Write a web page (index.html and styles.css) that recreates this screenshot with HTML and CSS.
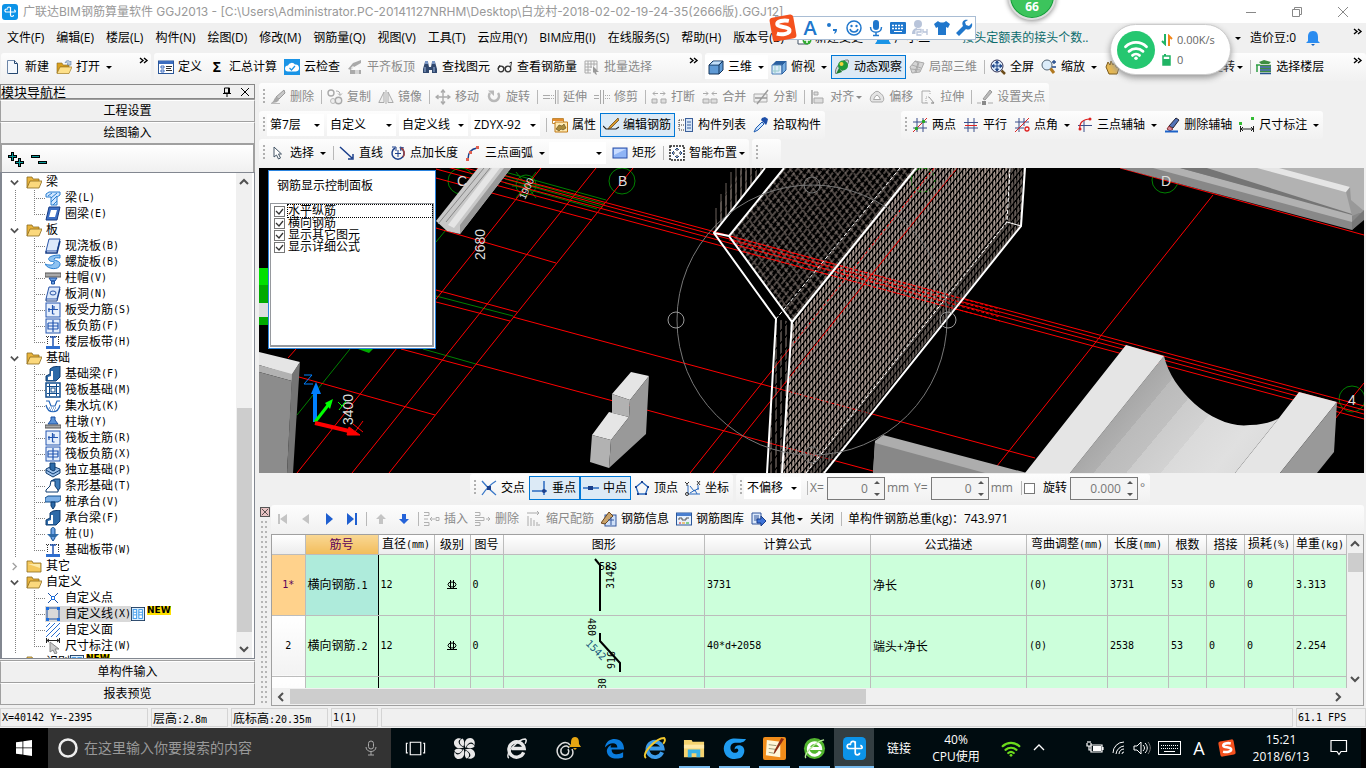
FILE: index.html
```
<!DOCTYPE html>
<html lang="zh-CN">
<head>
	<meta charset="utf-8">
	<title>广联达BIM钢筋算量软件 GGJ2013</title>
	<link rel="stylesheet" href="styles.css">
</head>
<body>
	<!-- 图标库 -->
	<svg class="sprite">
		<symbol id="app" viewBox="0 0 16 16"><rect width="16" height="16" rx="3" fill="#0c93e8"/><path d="M8.500 3v8a1.500 1.500 0 0 0 3 0M8.500 4.500a1.500 1.500 0 0 0-3 0M13 8H4.500a1.500 1.500 0 1 1 1-2.500M13 8a1.200 1.200 0 0 0-1-2" fill="none" stroke="#fff" stroke-width="1.200"/></symbol>
		<symbol id="new" viewBox="0 0 16 16"><path d="M2.500 1.500h7l3 3v10h-10z" fill="#f4f8fd" stroke="#6d86a8"/><path d="M9.500 1.500v3h3M12.500 5v9.500h-9" fill="none" stroke="#24476f"/></symbol>
		<symbol id="open" viewBox="0 0 16 16"><path d="M1 4h5l1 2h6v2H4l-3 6z" fill="#d9a01f" stroke="#8b6a1c" stroke-width=".6"/><path d="M4 8h12l-3 6.500H1z" fill="#fde08a" stroke="#a37d22" stroke-width=".7"/><path d="M9 4c1-3 4-3 5-1l1-1v4h-4l1-1c-1-2-2-2-3-1z" fill="#b9cbe0" stroke="#5f7fa8" stroke-width=".6"/></symbol>
		<symbol id="define" viewBox="0 0 16 16"><rect x=".5" y="2" width="15" height="12.500" fill="#fff" stroke="#2b579a"/><rect x="1" y="2" width="14" height="3" fill="#3c6dc0"/><path d="M3 7h3v2H3zM3 11h3v2H3z" fill="none" stroke="#3c6dc0"/><path d="M8 7.500h6M8 9.500h5M8 11.500h6" stroke="#333"/></symbol>
		<symbol id="cloud" viewBox="0 0 16 16"><rect width="16" height="16" fill="#1a94e6"/><path d="M4 12.500a3 3 0 0 1 0-6 4 4 0 0 1 7-1 3.500 3.500 0 0 1 1 7z" fill="#fff"/><path d="M5.500 9l2 2 3.500-4" fill="none" stroke="#1a94e6" stroke-width="1.200"/></symbol>
		<symbol id="aligntop" viewBox="0 0 16 16"><path d="M1 10l5-6 8-3v3L7 8l-3 3zM3 11h11v4H3z" fill="#aaa"/><path d="M5 11V8h2v3M9 15V9h2v6" stroke="#fff" fill="none"/></symbol>
		<symbol id="find" viewBox="0 0 16 16"><path d="M3 3h3l1 5h2l1-5h3l2 7v4h-5v-3H7v3H1v-4z" fill="#31486e"/><path d="M3 2h3v3H3zM10 2h3v3h-3z" fill="#7895c4"/><path d="M3 8v5M12 8v5" stroke="#9db6dc"/></symbol>
		<symbol id="glasses" viewBox="0 0 16 16"><circle cx="4" cy="10" r="2.800" fill="none" stroke="#333" stroke-width="1.300"/><circle cx="11" cy="10" r="2.800" fill="none" stroke="#333" stroke-width="1.300"/><path d="M6.500 9h2M1 10L3 6M13.500 9l1-6-2 1" fill="none" stroke="#333"/></symbol>
		<symbol id="batch" viewBox="0 0 16 16"><path d="M1 2h12v9M1 2v12h6M1 5h12M1 8h7M1 11h6M4 2v12M7 2v7M10 2v5" fill="none" stroke="#aaa"/><path d="M9 7l6 6-3 0 1 3-2-1-1-2-1 1z" fill="#999"/></symbol>
		<symbol id="cube" viewBox="0 0 16 16"><path d="M1 6l4-4h10v9l-4 4H1z" fill="#5f9ad5" stroke="#16365c"/><path d="M1 6h10v9M11 6l4-4" fill="none" stroke="#16365c"/><path d="M2 5.500l3.500-3h8L10.500 5.500z" fill="#c5e0f8"/></symbol>
		<symbol id="topview" viewBox="0 0 16 16"><path d="M1 6l4-4h10l-4 4z" fill="#2a5f9f"/><path d="M1 6h10v9H1z" fill="#d9ebfa" stroke="#4c7fb8"/><path d="M11 6l4-4v9l-4 4z" fill="#79aee0" stroke="#2a5f9f"/><path d="M4 6v9M8 6v6H1" fill="none" stroke="#9cc"/></symbol>
		<symbol id="orbit" viewBox="0 0 16 16"><path d="M2 15C-1 10 8 0 14 1c2 1-2 10-9 12" fill="#cfd8dc" stroke="#777"/><circle cx="9" cy="6.500" r="5" fill="#1f9a3a"/><circle cx="7.500" cy="5" r="2" fill="#f0d23c"/><path d="M2 15l3-6 3 4z" fill="#1c7f2e"/></symbol>
		<symbol id="local3d" viewBox="0 0 16 16"><path d="M1 8l5-6 9 2-4 9-8 1z" fill="#d5d5d5" stroke="#aaa"/><path d="M3 6l9 3M6 2l3 2-3 9M10 3L7 14M2 10l9 1" fill="none" stroke="#aaa"/></symbol>
		<symbol id="full" viewBox="0 0 16 16"><circle cx="7" cy="7" r="6" fill="#d9e8f8" stroke="#335"/><path d="M11.500 11.500L15 15" stroke="#6b4b1a" stroke-width="2.500"/><path d="M7 2v10M2 7h10M7 2L5.500 4h3zM7 12l-1.500-2h3zM2 7l2-1.500v3zM12 7l-2-1.500v3z" fill="#224a8c" stroke="#224a8c"/></symbol>
		<symbol id="zoomi" viewBox="0 0 16 16"><circle cx="6" cy="6" r="5" fill="#dcecfa" stroke="#567"/><path d="M9.500 9.500L13 14" stroke="#b07820" stroke-width="3"/><path d="M11 3h4M13 1v4M11 8h4" stroke="#224a8c" stroke-width="1.300"/></symbol>
		<symbol id="hand" viewBox="0 0 16 16"><path d="M2 8l2-5 2 3 1-4 2 4 2-3 1 5 3 1-2 6H5z" fill="#e8b951" stroke="#7b5a1b"/></symbol>
		<symbol id="floor" viewBox="0 0 16 16"><path d="M3 3l5-2 7 2-2 2H5z" fill="#3e8e41"/><path d="M4 6.500h11M4 9.500h11M4 12.500h11" stroke="#3e8e41" stroke-width="1.500"/><path d="M4 8h11M4 11h11M4 14.500h11" stroke="#24508f" stroke-width="1.300"/><path d="M1 6v7M0 6h4" stroke="#2f9e44" stroke-width="1.500"/></symbol>
		<symbol id="brush" viewBox="0 0 16 16"><path d="M14 1l1 3-6 6-3-2z" fill="#c8c8c8" stroke="#999"/><path d="M6 8l3 2c0 3-4 4-8 4 3-1 3-5 5-6z" fill="#a8a8a8"/><path d="M1 14.500h9" stroke="#bbb"/></symbol>
		<symbol id="copy" viewBox="0 0 16 16"><circle cx="4" cy="4" r="3" fill="none" stroke="#aaa" stroke-width="1.400"/><circle cx="6" cy="12" r="2.500" fill="#eee" stroke="#bbb"/><circle cx="11.500" cy="11.500" r="3.200" fill="#eee" stroke="#aaa" stroke-width="1.400"/><path d="M9 2c3 0 4 1 4 4M11 4.500l2 2 2-2" fill="none" stroke="#aaa"/></symbol>
		<symbol id="mirror" viewBox="0 0 16 16"><path d="M6 3v10.500H.8zM10 3v10.500h5.200z" fill="#eee" stroke="#aaa"/><path d="M8 1v14" stroke="#aaa"/></symbol>
		<symbol id="move" viewBox="0 0 16 16"><path d="M8 1v14M1 8h14M6 3.500L8 1l2 2.500M6 12.500L8 15l2-2.500M3.500 6L1 8l2.500 2M12.500 6L15 8l-2.500 2" fill="none" stroke="#aaa" stroke-width="1.400"/></symbol>
		<symbol id="rotate" viewBox="0 0 16 16"><path d="M4 4a5 5 0 1 0 8 0" fill="none" stroke="#b8b8b8" stroke-width="2.600"/><path d="M2 1.500h6V7z" fill="#b8b8b8"/></symbol>
		<symbol id="extend" viewBox="0 0 16 16"><path d="M0 6.500h7M0 9.500h7M12.500 1v14M15 1v14" fill="none" stroke="#aaa"/><path d="M8 6.500h4M8 9.500h4" stroke="#aaa" stroke-dasharray="1 1"/></symbol>
		<symbol id="trim" viewBox="0 0 16 16"><path d="M0 6.500h5M0 9.500h5M6.500 1v14M9.500 1v14" stroke="#aaa" fill="none"/><path d="M11 6.500h5M11 9.500h5" stroke="#aaa" stroke-dasharray="1 1"/></symbol>
		<symbol id="break" viewBox="0 0 16 16"><path d="M1 10h5v4H1zM10 10h5v4h-5z" fill="#ddd" stroke="#aaa"/><path d="M7 4.500H2M4 2.500l-2 2 2 2M9 4.500h5M12 2.500l2 2-2 2" fill="none" stroke="#aaa"/></symbol>
		<symbol id="merge" viewBox="0 0 16 16"><path d="M1 10h6v4H1zM9 10h6v4H9z" fill="#ddd" stroke="#aaa"/><path d="M1 4.500h5M4 2.500l2 2-2 2M15 4.500h-5M12 2.500l-2 2 2 2" fill="none" stroke="#aaa"/></symbol>
		<symbol id="split" viewBox="0 0 16 16"><path d="M1 5h13v8H1z" fill="#eee" stroke="#aaa"/><path d="M4 15L15 1M2 9h12" stroke="#999" stroke-width="1.400"/></symbol>
		<symbol id="align" viewBox="0 0 16 16"><path d="M2 1v14" stroke="#999" stroke-width="1.400"/><path d="M4 3h4v3H4zM4 9h9v5H4z" fill="#ddd" stroke="#aaa"/></symbol>
		<symbol id="offset" viewBox="0 0 16 16"><path d="M5 4a3.500 3.500 0 0 1 6 0c4 2 5 8 2 9H3c-3-1-2-7 2-9z" fill="#e4e4e4" stroke="#aaa"/><path d="M6.500 7a2 2 0 0 1 3 0l2 3.500h-7z" fill="#fff" stroke="#aaa"/></symbol>
		<symbol id="stretch" viewBox="0 0 16 16"><path d="M10 2H2v12h6" fill="#f6f6f6" stroke="#aaa"/><path d="M10 2v4M6 14V8h4" fill="none" stroke="#aaa" stroke-dasharray="1 1"/><path d="M9 8l5 6-2.500 0M14 14h-3" fill="none" stroke="#999"/></symbol>
		<symbol id="grips" viewBox="0 0 16 16"><path d="M0 14h4M11 14h5" stroke="#aaa"/><path d="M13 1l2 2-7 8-2-1z" fill="#bbb" stroke="#999"/><path d="M5 12h4v4H5z" fill="#888"/></symbol>
		<symbol id="prop" viewBox="0 0 16 16"><path d="M.5 1.500h11v5H.5z" fill="#fff" stroke="#c08a3a"/><path d="M1 2h10v2H1z" fill="#e58b2a"/><path d="M3 5h12.500v10H3z" fill="#ffe9b0" stroke="#c07a18"/><path d="M4 12l3-4 3 1 2-2 2 4-3 2-2-1-2 2z" fill="#a98a3a" stroke="#5a471a" stroke-width=".6"/></symbol>
		<symbol id="editbar" viewBox="0 0 16 16"><path d="M0 9l3 3h10l3-2" fill="none" stroke="#222" stroke-width="1.200"/><path d="M15 1l1 2-8 8-3 1 2-3z" fill="#d99a2b" stroke="#5a3a10" stroke-width=".7"/></symbol>
		<symbol id="list" viewBox="0 0 16 16"><path d="M1 3h5M1 8h5M1 13h5M1 3v10" fill="none" stroke="#333" stroke-dasharray="1 1"/><rect x="7.500" y="1.500" width="7" height="13" fill="#d4e4f7" stroke="#3b5f9a"/><path d="M9 5h4M9 8h4M9 11h4" stroke="#3b5f9a"/></symbol>
		<symbol id="pick" viewBox="0 0 16 16"><path d="M1 15l2-4 6-6 2 2-6 6z" fill="#cde5ff" stroke="#1e5bb0"/><path d="M8 3l5 5 1-2 1-4-3-2-3 1z" fill="#1e4fa8"/></symbol>
		<symbol id="grid2" viewBox="0 0 16 16"><path d="M5 1v14M11 1v14M1 5h14M1 11h14" stroke="#3b4f8a"/><path d="M1 15L15 1" stroke="#d22"/><circle cx="4.500" cy="11.500" r="1.700" fill="#2a2"/><circle cx="11.500" cy="4.500" r="1.700" fill="#2a2"/></symbol>
		<symbol id="gridp" viewBox="0 0 16 16"><path d="M5 1v14M11 1v14M1 11h14" stroke="#3b4f8a"/><path d="M1 5.500h14" stroke="#3b4f8a"/><path d="M2 8.500h12" stroke="#d22"/></symbol>
		<symbol id="grida" viewBox="0 0 16 16"><path d="M5 1v14M10 1v8M1 5h14M1 11h9" stroke="#3b4f8a"/><path d="M1 15L15 1" stroke="#d22"/><circle cx="13" cy="12" r="2" fill="none" stroke="#d22" stroke-width="1.300"/></symbol>
		<symbol id="grid3" viewBox="0 0 16 16"><path d="M7 3v12M1 8.500h14" stroke="#3b4f8a"/><path d="M3 12C2 6 6 2 13 2" fill="none" stroke="#d22" stroke-width="1.200"/><circle cx="13" cy="2" r="1.500" fill="#d22"/><circle cx="3" cy="12" r="1.500" fill="#d22"/></symbol>
		<symbol id="delaxis" viewBox="0 0 16 16"><path d="M12 1l3 2-6 8-4-2z" fill="#5273b8" stroke="#223"/><path d="M5 9l4 3-3 2-3-2z" fill="#d98a9a" stroke="#833"/><path d="M1 14.500h13" stroke="#1c62c8" stroke-width="2"/></symbol>
		<symbol id="dim" viewBox="0 0 16 16"><path d="M1.500 9v6M14.500 9v6M2 12h12M4 10l-2 2 2 2M12 10l2 2-2 2" fill="none" stroke="#222"/><path d="M0 5h3v3H0zM12 0h3v3h-3z" fill="#3b3"/></symbol>
		<symbol id="cursor" viewBox="0 0 16 16"><path d="M4 2v10l2.500-2 2 4 2-1-2-4h3z" fill="#fff" stroke="#456"/></symbol>
		<symbol id="line" viewBox="0 0 16 16"><path d="M1 2l12 11M14 9v5H9" fill="none" stroke="#1b3f8b" stroke-width="1.500"/></symbol>
		<symbol id="ptlen" viewBox="0 0 16 16"><path d="M5 3a6 6 0 1 0 6 0" fill="none" stroke="#1b3f8b" stroke-width="1.500"/><path d="M8 5v7M5 8.500h6M2 2h4v4M14 3l-4-1 1 4" fill="none" stroke="#1b3f8b"/><path d="M11 3a6 6 0 0 1 2 9" stroke="#a04040" fill="none" stroke-width="1.500"/></symbol>
		<symbol id="arc" viewBox="0 0 16 16"><path d="M3 14C3 8 6 4 12 3" fill="none" stroke="#1b3f8b" stroke-width="1.500"/><path d="M1 13h3v3H1zM4 6h3v3H4zM11 1h3v3h-3z" fill="#e06050"/></symbol>
		<symbol id="rect" viewBox="0 0 16 16"><rect x="1" y="3" width="14" height="10" fill="#8fb4f5" stroke="#2a4fa8"/><path d="M2 4h12l-12 6z" fill="#c9dcff"/></symbol>
		<symbol id="smart" viewBox="0 0 16 16"><rect x="1" y="1" width="14" height="14" fill="#fff" stroke="#222" stroke-width="1.500" stroke-dasharray="2 1"/><path d="M8 3v3M8 10v3M3 8h3M10 8h3" stroke="#222"/><path d="M6 5l2-2 2 2M6 11l2 2 2-2M5 6L3 8l2 2M11 6l2 2-2 2" fill="none" stroke="#224a8c"/></symbol>
		<symbol id="s-int" viewBox="0 0 16 16"><path d="M1 1c4 5 9 10 14 14M1 15C5 9 10 4 15 1" fill="none" stroke="#3a78c8" stroke-width="1.300"/><rect x="6" y="6" width="4" height="4" fill="#1b3f8b"/></symbol>
		<symbol id="s-perp" viewBox="0 0 16 16"><path d="M12 1v14M0 11h15" stroke="#2a6ac0" stroke-width="1.500"/><circle cx="12" cy="11" r="2" fill="#1b3f8b"/></symbol>
		<symbol id="s-mid" viewBox="0 0 16 16"><path d="M0 8h16" stroke="#2a6ac0" stroke-width="1.500"/><rect x="5" y="6" width="5" height="4" fill="#1b3f8b"/></symbol>
		<symbol id="s-vert" viewBox="0 0 16 16"><path d="M8 2l6 5-2.500 7h-7L2 7z" fill="none" stroke="#2a6ac0" stroke-width="1.300"/><path d="M7 1h2v2H7zM13 6h2v2h-2zM1 6h2v2H1zM3 13h2v2H3zM11 13h2v2h-2z" fill="#1b3f8b"/></symbol>
		<symbol id="s-coord" viewBox="0 0 16 16"><path d="M3 5v9h12M5 6l4 5 5-3M5 13l5-3 2 4M13 5v5" fill="none" stroke="#2a6ac0"/><path d="M0 2l2 2 2-2M2 4v2M12 1l3 4M15 1l-3 4" fill="none" stroke="#333"/><circle cx="2" cy="14" r="1.500" fill="none" stroke="#333"/></symbol>
		<symbol id="r-ins" viewBox="0 0 16 16"><path d="M0 1.500h5v3H0M0 11.500h5v3H0M0 8h4M11 8H6M8 6L6 8l2 2M12 6.500h3v3h-3z" fill="none" stroke="#b0b0b0"/></symbol>
		<symbol id="r-del" viewBox="0 0 16 16"><path d="M0 1.500h5v3H0M0 11.500h5v3H0M0 6.500h9v3H0M11 8h4M13 6l2 2-2 2" fill="none" stroke="#b0b0b0"/></symbol>
		<symbol id="r-scale" viewBox="0 0 16 16"><path d="M1 2h12M11 0l2 2-2 2M2 5v10M5 7v8M8 9v6M11 11v4M13 13v2" fill="none" stroke="#aaa"/></symbol>
		<symbol id="r-info" viewBox="0 0 16 16"><rect x="4" y="4" width="11" height="11" fill="#cfe0f8" stroke="#33579c"/><path d="M0 12L8 1l4 4-8 8z" fill="#c9a36a" stroke="#6b451c"/><path d="M7 9h6M10 6v8" stroke="#33579c"/></symbol>
		<symbol id="r-lib" viewBox="0 0 16 16"><rect x=".5" y="2" width="15" height="12" fill="#e8f1fc" stroke="#2b579a"/><path d="M1 2h14v3H1z" fill="#4a7fcf"/><path d="M3 9V7h3v2h4V7h3" fill="none" stroke="#555"/><path d="M3 12h2" stroke="#d22"/><path d="M6 12h3" stroke="#e90"/><path d="M10 12h3" stroke="#2a2"/></symbol>
		<symbol id="r-other" viewBox="0 0 16 16"><path d="M1 2h9v11H1z" fill="#dbe8fa" stroke="#33579c"/><path d="M3 5h5M3 7h5M3 9h3" stroke="#33579c"/><path d="M6 8h4V5l5 5-5 5v-3H6z" fill="#3f74d8" stroke="#1b3f8b"/></symbol>
		<symbol id="n-first" viewBox="0 0 12 12"><path d="M1 1h2v10H1zM10 1v10L3 6z" fill="#c4c4c4"/></symbol>
		<symbol id="n-prev" viewBox="0 0 12 12"><path d="M9 1v10L2 6z" fill="#c4c4c4"/></symbol>
		<symbol id="n-next" viewBox="0 0 12 12"><path d="M3 0v12l7-6z" fill="#1f5fd0"/></symbol>
		<symbol id="n-last" viewBox="0 0 12 12"><path d="M1 0v12l7-6zM9 0h2v12H9z" fill="#1f5fd0"/></symbol>
		<symbol id="n-up" viewBox="0 0 12 12"><path d="M6 1l5 5H8v5H4V6H1z" fill="#c4c4c4"/></symbol>
		<symbol id="n-down" viewBox="0 0 12 12"><path d="M6 11l5-5H8V1H4v5H1z" fill="#2563d9"/></symbol>
		<!-- 构件树 -->
		<symbol id="fopen" viewBox="0 0 16 14"><path d="M1 13V2h5l1 2h6v3" fill="#e9b43c" stroke="#8b6a1c" stroke-width=".8"/><path d="M4 6h12l-3 7H1z" fill="#fbd87c" stroke="#8b6a1c" stroke-width=".8"/></symbol>
		<symbol id="fclose" viewBox="0 0 16 14"><path d="M1 2h5l1 2h8v9H1z" fill="#f4c85c" stroke="#8b6a1c" stroke-width=".8"/><path d="M2 5h12v4z" fill="#fdeaa8"/></symbol>
		<symbol id="t-beam" viewBox="0 0 16 16"><path d="M1 4l3-2h11v3l-3 2v8H6V7H1z" fill="#cfe6ff" stroke="#2a7fd0"/><path d="M6 8l6-5M6 12l6-6M8 15l4-4M3 6l4-3" stroke="#2a7fd0"/></symbol>
		<symbol id="t-ring" viewBox="0 0 16 16"><path d="M4 1h11l-3 13H1z" fill="#3d6fc4" stroke="#153c86"/><path d="M6 4h6l-2 7H4z" fill="#fff"/></symbol>
		<symbol id="t-slab" viewBox="0 0 16 16"><path d="M4 1h11l-3 12H1z" fill="#dce9fb" stroke="#2a55a8"/><path d="M1 13v2h11l3-12" fill="none" stroke="#153c86" stroke-width="1.500"/></symbol>
		<symbol id="t-spiral" viewBox="0 0 16 16"><path d="M15 1C8 1 2 3 4 6s6 0 5 3-6 2-9 1c3 6 14 6 15 1s-7-4-6-6 4-1 6-1z" fill="#8ec3f2" stroke="#2a7fd0"/></symbol>
		<symbol id="t-cap" viewBox="0 0 16 16"><path d="M0 3h16v4H0z" fill="#aaa" stroke="#555"/><path d="M4 8h8l-2 3H6zM6.500 11h3v3h-3z" fill="#6fa4e6" stroke="#1b4fa0"/></symbol>
		<symbol id="t-hole" viewBox="0 0 16 16"><path d="M4 1h11l-3 12H1z" fill="#dce9fb" stroke="#2a55a8"/><ellipse cx="8" cy="7" rx="3" ry="2" fill="none" stroke="#2a55a8"/><path d="M1 13v2h11l3-12" fill="none" stroke="#153c86"/></symbol>
		<symbol id="t-bar1" viewBox="0 0 16 16"><rect x="1" y="1" width="14" height="14" fill="#e6effc" stroke="#2456b0"/><path d="M3 7.500h10M7.500 3v9M4 6v4M7.500 12h2M9 4v3" fill="none" stroke="#2456b0" stroke-width="1.200"/></symbol>
		<symbol id="t-bar2" viewBox="0 0 16 16"><rect x="1" y="1" width="14" height="14" fill="#e6effc" stroke="#2456b0"/><path d="M3 8h10M8 2v12M3 5h10v6M3 5v6h10" fill="none" stroke="#2456b0" stroke-width="1.200"/></symbol>
		<symbol id="t-band" viewBox="0 0 16 16"><path d="M1 2.500h14M2.500 3v8M13.500 3v8" stroke="#333" stroke-dasharray="1 1"/><path d="M5 3h6M8 3v9" stroke="#2456b0" stroke-width="1.500"/><path d="M1 12h14v3H1z" fill="#2f6fd0"/></symbol>
		<symbol id="t-fbeam" viewBox="0 0 16 16"><path d="M1 14v-4l4-2V3l3-2 7-1v11l-4 4H1z" fill="#2d6aa8" stroke="#0f3c70"/><path d="M3 14v-3l3-1V5h2v9z" fill="#fff"/></symbol>
		<symbol id="t-raft" viewBox="0 0 16 16"><rect x="1" y="1" width="14" height="14" fill="#fff" stroke="#0f4c8c" stroke-width="1.500"/><path d="M4.500 2v12M11.500 2v12M2 4.500h12M2 11.500h12" stroke="#0f4c8c"/><rect x="6" y="6" width="4" height="4" fill="#fff" stroke="#0f4c8c"/></symbol>
		<symbol id="t-pit" viewBox="0 0 16 16"><path d="M1 3h3l2 5h4l2-5h3M1 7c2 9 12 9 14 0" fill="none" stroke="#2465b8" stroke-width="1.200"/><path d="M4 10h8M5 12h6" stroke="#2465b8" stroke-dasharray="1 1"/></symbol>
		<symbol id="t-pier" viewBox="0 0 16 16"><path d="M6 3h4v3l3 4H3l3-4z" fill="#5b93d8" stroke="#1b4fa0"/><path d="M0 11h16v3H0z" fill="#aaa" stroke="#555"/></symbol>
		<symbol id="t-iso" viewBox="0 0 16 16"><path d="M1 7l6-3 8 3v4l-7 4-7-4z" fill="#9cc0ea" stroke="#0f3c70"/><path d="M5 1h5v7l-2 1-3-2z" fill="#2d6aa8" stroke="#0f3c70"/><path d="M1 8l7 4 7-4" fill="none" stroke="#0f3c70"/></symbol>
		<symbol id="t-strip" viewBox="0 0 16 16"><path d="M6 3l4-2h5v9l-3 4z" fill="#3f7dba" stroke="#0f3c70"/><path d="M6 3h4v5l3 4v2H1v-2l4-4z" fill="#fff" stroke="#0f3c70"/></symbol>
		<symbol id="t-pcap" viewBox="0 0 16 16"><path d="M0 4l3-2h13v4l-3 2H0z" fill="#7db0e6" stroke="#0f4c8c"/><path d="M6 8h4v4l-2 3-2-3z" fill="#2d6aa8" stroke="#0f3c70"/></symbol>
		<symbol id="t-pile" viewBox="0 0 16 16"><path d="M6 3c1-2 3-2 4 0v9l-2 3-2-3z" fill="#6fa4e6" stroke="#0f4c8c"/><path d="M2 8h12l-3 3H5z" fill="#2d6aa8"/></symbol>
		<symbol id="t-pt" viewBox="0 0 16 16"><path d="M3 3l10 10M3 13L13 3" stroke="#1b4fa0"/><rect x="6.500" y="6.500" width="3" height="3" fill="#fff" stroke="#1d6fe0"/></symbol>
		<symbol id="t-ln" viewBox="0 0 16 16"><path d="M3 2h10M3 13h10M2 3v10M14 3v10" stroke="#1b4fa0"/><path d="M1 1h3v3H1zM12 1h3v3h-3zM1 12h3v3H1zM12 12h3v3h-3z" fill="#1d6fe0"/></symbol>
		<symbol id="t-face" viewBox="0 0 16 16"><path d="M1 5l4-4M1 10l9-9M1 15L15 1M6 15l9-9M11 15l4-4" stroke="#2a6fd0"/></symbol>
		<symbol id="t-dim" viewBox="0 0 16 16"><path d="M1.500 0v5M14.500 0v5M2 2.500h12M4 1L2 2.500 4 4M12 1l2 1.500L12 4" stroke="#222" fill="none"/><path d="M5 4v10l3-2 2 4 2-1-2-4h4z" fill="#ccc" stroke="#888"/></symbol>
		<symbol id="t-book" viewBox="0 0 16 16"><rect x=".5" y=".5" width="15" height="15" fill="#dcefff" stroke="#16365c"/><rect x="2.500" y="3" width="4" height="10" fill="#fff" stroke="#2a90e8"/><rect x="9" y="3" width="4" height="10" fill="#fff" stroke="#2a90e8"/><path d="M3 6h3M3 9h3M9 6h4M9 9h4" stroke="#2a90e8"/></symbol>
		<symbol id="b-close" viewBox="0 0 10 10"><path d="M1 1l8 8M9 1L1 9" stroke="#333"/></symbol>
		<symbol id="c-up" viewBox="0 0 10 10"><path d="M1 7l4-4 4 4" fill="none" stroke="#505050" stroke-width="2"/></symbol>
		<symbol id="c-down" viewBox="0 0 10 10"><path d="M1 3l4 4 4-4" fill="none" stroke="#505050" stroke-width="2"/></symbol>
		<symbol id="c-left" viewBox="0 0 10 10"><path d="M7 1L3 5l4 4" fill="none" stroke="#505050" stroke-width="2"/></symbol>
		<symbol id="c-right" viewBox="0 0 10 10"><path d="M3 1l4 4-4 4" fill="none" stroke="#505050" stroke-width="2"/></symbol>
		<symbol id="c-shut" viewBox="0 0 10 10"><path d="M3 1l4 4-4 4" fill="none" stroke="#a0a0a0" stroke-width="1.500"/></symbol>
		<symbol id="more" viewBox="0 0 10 8"><path d="M1 1l3 2.500L1 6M5 1l3 2.500L5 6" fill="none" stroke="#000" stroke-width="1.400"/></symbol>
		<symbol id="wifi" viewBox="0 0 24 24"><path d="M3 10a13 13 0 0 1 18 0M6 14a9 9 0 0 1 12 0M9 17.500a4.500 4.500 0 0 1 6 0" fill="none" stroke="currentColor" stroke-width="2.400" stroke-linecap="round"/><circle cx="12" cy="20" r="1.500" fill="currentColor"/></symbol>
		<symbol id="sogou" viewBox="0 0 28 28"><g transform="rotate(-10 14 14)"><rect x="2" y="2" width="24" height="24" rx="3" fill="#f4511e"/><path d="M21 8c-5-2-12-2-12 1.500S20 13 20 17s-8 4-13 1.500" fill="none" stroke="#fff" stroke-width="4"/></g></symbol>
	</svg>

	<header class="title">
		<svg class="ico"><use href="#app"/></svg>
		<span class="title-text">广联达BIM钢筋算量软件 GGJ2013 - [C:\Users\Administrator.PC-20141127NRHM\Desktop\白龙村-2018-02-02-19-24-35(2666版).GGJ12]</span>
		<button class="win" aria-label="最小化"><svg viewBox="0 0 10 10"><path d="M0 5.500h10" stroke="#888"/></svg></button>
		<button class="win" aria-label="还原"><svg viewBox="0 0 10 10"><path d="M.5 2.500h7v7h-7zM2.500 2.500v-2h7v7h-2" fill="none" stroke="#888"/></svg></button>
		<button class="win" aria-label="关闭"><svg viewBox="0 0 10 10"><path d="M0 0l10 10M10 0L0 10" stroke="#888"/></svg></button>
	</header>

	<nav class="menu">
		<button>文件(F)</button><button>编辑(E)</button><button>楼层(L)</button><button>构件(N)</button><button>绘图(D)</button><button>修改(M)</button><button>钢筋量(Q)</button><button>视图(V)</button><button>工具(T)</button><button>云应用(Y)</button><button>BIM应用(I)</button><button>在线服务(S)</button><button>帮助(H)</button><button>版本号(B)</button>
		<button><svg class="ico" viewBox="0 0 16 16"><path d="M2 2h10v12H2z" fill="#fff" stroke="#456"/><circle cx="11" cy="10" r="4.500" fill="#3a3"/><path d="M11 7v6M8 10h6" stroke="#fff" stroke-width="1.500"/></svg>新建变更</button>
		<button><svg class="ico" viewBox="0 0 16 16"><path d="M2 4h12v7l2 3H0l2-3z" fill="#1a94e6"/></svg>广小二</button>
		<a class="news" href="#">接头定额表的接头个数..</a>
		<button class="beans"><i class="arr"></i><span>造价豆:0</span><svg class="ico" viewBox="0 0 16 16"><path d="M8 1c4 0 5 3 5 6v4l2 2H1l2-2V7c0-3 1-6 5-6z" fill="#2b8cf0"/><path d="M6 14h4l-2 2z" fill="#1763c0"/></svg></button>
		<button class="more" aria-label="更多"><svg><use href="#more"/></svg></button>
	</nav>

	<div class="main-bar">
		<div class="tools tools-file">
			<button class="btn"><svg class="ico"><use href="#new"/></svg>新建</button>
			<button class="btn"><svg class="ico"><use href="#open"/></svg>打开<i class="arr"></i></button>
			<button class="more" aria-label="更多"><svg><use href="#more"/></svg></button>
		</div>
		<div class="tools tools-calc">
			<button class="btn"><svg class="ico"><use href="#define"/></svg>定义</button>
			<button class="btn"><b class="sigma">Σ</b>汇总计算</button>
			<button class="btn"><svg class="ico"><use href="#cloud"/></svg>云检查</button>
			<button class="btn" disabled><svg class="ico"><use href="#aligntop"/></svg>平齐板顶</button>
			<button class="btn"><svg class="ico"><use href="#find"/></svg>查找图元</button>
			<button class="btn"><svg class="ico"><use href="#glasses"/></svg>查看钢筋量</button>
			<button class="btn" disabled><svg class="ico"><use href="#batch"/></svg>批量选择</button>
			<button class="more" aria-label="更多"><svg><use href="#more"/></svg></button>
		</div>
		<div class="tools tools-view">
			<button class="btn white"><svg class="ico"><use href="#cube"/></svg>三维<i class="arr"></i></button>
			<button class="btn"><svg class="ico"><use href="#topview"/></svg>俯视<i class="arr"></i></button>
			<button class="btn on"><svg class="ico"><use href="#orbit"/></svg>动态观察</button>
			<button class="btn" disabled><svg class="ico"><use href="#local3d"/></svg>局部三维</button>
			<i class="sep"></i>
			<button class="btn"><svg class="ico"><use href="#full"/></svg>全屏</button>
			<button class="btn"><svg class="ico"><use href="#zoomi"/></svg>缩放<i class="arr"></i></button>
			<button class="btn"><svg class="ico"><use href="#hand"/></svg>平移<i class="arr"></i></button>
			<button class="btn"><svg class="ico"><use href="#rotate"/></svg>屏幕旋转<i class="arr near"></i></button>
			<i class="sep"></i>
			<button class="btn"><svg class="ico"><use href="#floor"/></svg>选择楼层</button>
			<button class="more" aria-label="更多"><svg><use href="#more"/></svg></button>
		</div>
	</div>

	<div class="body">
		<aside class="side">
			<h2 class="side-title">模块导航栏
				<svg viewBox="0 0 10 10"><path d="M2.500 1h5v5h-5zM6.500 1v5M1 6.500h8M5 7v3" fill="none" stroke="#000"/></svg>
				<svg viewBox="0 0 10 10"><path d="M1 1l8 8M9 1L1 9" stroke="#000"/></svg>
			</h2>
			<button class="tab">工程设置</button>
			<button class="tab">绘图输入</button>
			<div class="expand">
				<svg viewBox="0 0 42 16"><path d="M5 1h3v3h3v3H8v3H5V7H2V4h3zM12 7h3v3h3v3h-3v3h-3v-3H9v-3h3zM25 4h9v3h-9zM32 10h9v3h-9z" fill="#000"/><path d="M3 5.500h7M6.500 2v7M10 11.500h7M13.500 8v7M26 5.500h7M33 11.500h7" stroke="#0a9a9a"/></svg>
			</div>
			<div class="tree">
				<ul class="tree-list">
					<li class="dir"><svg class="chev"><use href="#c-down"/></svg><svg class="folder"><use href="#fopen"/></svg>梁
						<ul>
							<li><svg class="ico"><use href="#t-beam"/></svg>梁<kbd>(L)</kbd></li>
							<li><svg class="ico"><use href="#t-ring"/></svg>圈梁<kbd>(E)</kbd></li>
						</ul>
					</li>
					<li class="dir"><svg class="chev"><use href="#c-down"/></svg><svg class="folder"><use href="#fopen"/></svg>板
						<ul>
							<li><svg class="ico"><use href="#t-slab"/></svg>现浇板<kbd>(B)</kbd></li>
							<li><svg class="ico"><use href="#t-spiral"/></svg>螺旋板<kbd>(B)</kbd></li>
							<li><svg class="ico"><use href="#t-cap"/></svg>柱帽<kbd>(V)</kbd></li>
							<li><svg class="ico"><use href="#t-hole"/></svg>板洞<kbd>(N)</kbd></li>
							<li><svg class="ico"><use href="#t-bar1"/></svg>板受力筋<kbd>(S)</kbd></li>
							<li><svg class="ico"><use href="#t-bar2"/></svg>板负筋<kbd>(F)</kbd></li>
							<li><svg class="ico"><use href="#t-band"/></svg>楼层板带<kbd>(H)</kbd></li>
						</ul>
					</li>
					<li class="dir"><svg class="chev"><use href="#c-down"/></svg><svg class="folder"><use href="#fopen"/></svg>基础
						<ul>
							<li><svg class="ico"><use href="#t-fbeam"/></svg>基础梁<kbd>(F)</kbd></li>
							<li><svg class="ico"><use href="#t-raft"/></svg>筏板基础<kbd>(M)</kbd></li>
							<li><svg class="ico"><use href="#t-pit"/></svg>集水坑<kbd>(K)</kbd></li>
							<li><svg class="ico"><use href="#t-pier"/></svg>柱墩<kbd>(Y)</kbd></li>
							<li><svg class="ico"><use href="#t-bar1"/></svg>筏板主筋<kbd>(R)</kbd></li>
							<li><svg class="ico"><use href="#t-bar2"/></svg>筏板负筋<kbd>(X)</kbd></li>
							<li><svg class="ico"><use href="#t-iso"/></svg>独立基础<kbd>(P)</kbd></li>
							<li><svg class="ico"><use href="#t-strip"/></svg>条形基础<kbd>(T)</kbd></li>
							<li><svg class="ico"><use href="#t-pcap"/></svg>桩承台<kbd>(V)</kbd></li>
							<li><svg class="ico"><use href="#t-fbeam"/></svg>承台梁<kbd>(F)</kbd></li>
							<li><svg class="ico"><use href="#t-pile"/></svg>桩<kbd>(U)</kbd></li>
							<li><svg class="ico"><use href="#t-band"/></svg>基础板带<kbd>(W)</kbd></li>
						</ul>
					</li>
					<li class="dir"><svg class="chev"><use href="#c-shut"/></svg><svg class="folder"><use href="#fclose"/></svg>其它</li>
					<li class="dir"><svg class="chev"><use href="#c-down"/></svg><svg class="folder"><use href="#fopen"/></svg>自定义
						<ul>
							<li><svg class="ico"><use href="#t-pt"/></svg>自定义点</li>
							<li><span class="sel"><svg class="ico"><use href="#t-ln"/></svg>自定义线<kbd>(X)</kbd></span><svg class="book"><use href="#t-book"/></svg><em class="new">NEW</em></li>
							<li><svg class="ico"><use href="#t-face"/></svg>自定义面</li>
							<li><svg class="ico"><use href="#t-dim"/></svg>尺寸标注<kbd>(W)</kbd></li>
						</ul>
					</li>
					<li class="dir"><svg class="chev"></svg><svg class="folder"><use href="#fclose"/></svg>识别<svg class="book"><use href="#t-book"/></svg><em class="new">NEW</em></li>
				</ul>
				<div class="vbar"><svg><use href="#c-up"/></svg><i class="tree-thumb"></i><svg><use href="#c-down"/></svg></div>
			</div>
			<button class="tab">单构件输入</button>
			<button class="tab">报表预览</button>
		</aside>

		<main class="work">
			<div class="bar">
				<div class="tools">
					<i class="grip"></i>
					<button class="btn" disabled><svg class="ico"><use href="#brush"/></svg>删除</button>
					<i class="sep"></i>
					<button class="btn" disabled><svg class="ico"><use href="#copy"/></svg>复制</button>
					<button class="btn" disabled><svg class="ico"><use href="#mirror"/></svg>镜像</button>
					<i class="sep"></i>
					<button class="btn" disabled><svg class="ico"><use href="#move"/></svg>移动</button>
					<button class="btn" disabled><svg class="ico"><use href="#rotate"/></svg>旋转</button>
					<i class="sep"></i>
					<button class="btn" disabled><svg class="ico"><use href="#extend"/></svg>延伸</button>
					<button class="btn" disabled><svg class="ico"><use href="#trim"/></svg>修剪</button>
					<i class="sep"></i>
					<button class="btn" disabled><svg class="ico"><use href="#break"/></svg>打断</button>
					<button class="btn" disabled><svg class="ico"><use href="#merge"/></svg>合并</button>
					<button class="btn" disabled><svg class="ico"><use href="#split"/></svg>分割</button>
					<i class="sep"></i>
					<button class="btn" disabled><svg class="ico"><use href="#align"/></svg>对齐<i class="arr near"></i></button>
					<button class="btn" disabled><svg class="ico"><use href="#offset"/></svg>偏移</button>
					<button class="btn" disabled><svg class="ico"><use href="#stretch"/></svg>拉伸</button>
					<i class="sep"></i>
					<button class="btn" disabled><svg class="ico"><use href="#grips"/></svg>设置夹点</button>
				</div>
			</div>
			<div class="bar">
				<div class="tools">
					<i class="grip"></i>
					<select class="combo short" aria-label="楼层"><option>第7层</option></select>
					<select class="combo" aria-label="构件类别"><option>自定义</option></select>
					<select class="combo" aria-label="构件类型"><option>自定义线</option></select>
					<select class="combo" aria-label="构件"><option>ZDYX-92</option></select>
					<i class="sep"></i>
					<button class="btn"><svg class="ico"><use href="#prop"/></svg>属性</button>
					<button class="btn on"><svg class="ico"><use href="#editbar"/></svg>编辑钢筋</button>
					<button class="btn"><svg class="ico"><use href="#list"/></svg>构件列表</button>
					<button class="btn"><svg class="ico"><use href="#pick"/></svg>拾取构件</button>
				</div>
				<div class="tools tools-axis">
					<i class="grip"></i>
					<button class="btn"><svg class="ico"><use href="#grid2"/></svg>两点</button>
					<button class="btn"><svg class="ico"><use href="#gridp"/></svg>平行</button>
					<button class="btn"><svg class="ico"><use href="#grida"/></svg>点角<i class="arr"></i></button>
					<button class="btn"><svg class="ico"><use href="#grid3"/></svg>三点辅轴<i class="arr"></i></button>
					<button class="btn"><svg class="ico"><use href="#delaxis"/></svg>删除辅轴</button>
					<button class="btn"><svg class="ico"><use href="#dim"/></svg>尺寸标注<i class="arr"></i></button>
				</div>
			</div>
			<div class="bar">
				<div class="tools">
					<i class="grip"></i>
					<button class="btn"><svg class="ico"><use href="#cursor"/></svg>选择<i class="arr"></i></button>
					<i class="sep"></i>
					<button class="btn"><svg class="ico"><use href="#line"/></svg>直线</button>
					<button class="btn"><svg class="ico"><use href="#ptlen"/></svg>点加长度</button>
					<button class="btn"><svg class="ico"><use href="#arc"/></svg>三点画弧<i class="arr"></i></button>
					<select class="combo short" aria-label="画弧方式"><option></option></select>
					<button class="btn"><svg class="ico"><use href="#rect"/></svg>矩形</button>
					<i class="sep"></i>
					<button class="btn"><svg class="ico"><use href="#smart"/></svg>智能布置<i class="arr near"></i></button>
				</div>
				<div class="tools tools-empty"><i class="grip"></i></div>
			</div>

			<section class="view">
				<svg class="scene" viewBox="259 168 1105 305" preserveAspectRatio="xMidYMid slice">
					<defs>
						<!-- 倾斜的竖筋，断口沿斜向排列 -->
						<pattern id="wall" width="3" height="8" patternUnits="userSpaceOnUse" patternTransform="skewY(-51)"><path d="M1 0v6" stroke="#a3948c" stroke-width="1.600"/><path d="M2.500 3v3" stroke="#6b605b" stroke-width=".8"/></pattern>
						<pattern id="net1" width="5" height="6" patternUnits="userSpaceOnUse" patternTransform="rotate(39)"><path d="M1 0v5" stroke="#8d8079" stroke-width="1.100"/></pattern>
						<pattern id="net2" width="7" height="6" patternUnits="userSpaceOnUse" patternTransform="rotate(-36)"><path d="M1 0v5" stroke="#8d8079"/></pattern>
						<pattern id="posts" width="5" height="12" patternUnits="userSpaceOnUse" patternTransform="skewY(-51)"><path d="M1 0v10" stroke="#a3948c"/></pattern>
						<linearGradient id="bowl" x1="1130" y1="400" x2="1250" y2="500" gradientUnits="userSpaceOnUse">
							<stop offset="0" stop-color="#a8a8a8"/><stop offset=".12" stop-color="#b0b0b0"/><stop offset=".12" stop-color="#bbb"/><stop offset=".28" stop-color="#c0c0c0"/><stop offset=".28" stop-color="#ccc"/><stop offset=".45" stop-color="#d2d2d2"/><stop offset=".45" stop-color="#dadada"/><stop offset=".7" stop-color="#e0e0e0"/><stop offset="1" stop-color="#d8d8d8"/>
						</linearGradient>
					</defs>
					<rect x="259" y="168" width="1105" height="305" fill="#000"/>
					<!-- 轴网 -->
					<g stroke="#008000" fill="none">
						<path d="M505 172l101 28M505 176l100 28M505 179l98 28M505 183l92 26M436 296l77 20M423 349l53 15M297 415l53-66M436 242l14-17"/>
						<circle cx="461" cy="181" r="13"/><circle cx="526" cy="185" r="10"/><circle cx="622" cy="181" r="13"/><circle cx="1165" cy="180" r="13"/><circle cx="1352" cy="399" r="13"/><circle cx="923" cy="180" r="12"/>
						<path d="M516 172l20 26M536 172l-20 26M512 186h28"/>
					</g>
					<g stroke="#f00" fill="none">
						<path d="M436 157l928 249M436 160l928 250M436 164l928 250M436 169l928 250M436 178l156 42"/>
						<path d="M436 228l120 35M436 290l81 22M436 302l74 19M513 317l522 141M401 349l71 19M476 364l397 107M299 377l136 38"/>
						<path d="M297 473l244-305M352 473l244-305M389 473l244-305M288 358l8-9M690 473l244-305M713 473l244-305M1213 195L997 466M1120 168l244 67M1335 419l29-36"/>
					</g>
					<!-- 构件实体 -->
					<path d="M259 268h10v17h-10z" fill="#00e000"/><path d="M259 285h10v18h-10zM259 317h10v8h-10zM358 349h15l-4 4z" fill="#0a0"/><path d="M259 303h10v14h-10z" fill="#ddd"/>
					<path d="M478 168h33l-51 66-13-3-11-10z" fill="#c8c8c8"/><path d="M511 168l-51 66v-9l44-57z" fill="#999"/><path d="M484 168l-46 56M490 168l-44 54" stroke="#888"/><path d="M492 168h8l-46 60-6-3z" fill="#e5e5e5"/>
					<path d="M259 352l41 10-8 13-33-10z" fill="#e5e5e5"/><path d="M259 365l33 9v7l-33-9z" fill="#b2b2b2"/><path d="M259 372l33 9-5 92h-28z" fill="#8c8c8c"/><path d="M292 374l8-12-7 111h-6z" fill="#757575"/>
					<path d="M631 372l18 4-19 24-18-6zM609 412l20 5-18 23-19-5z" fill="#e5e5e5"/><path d="M612 394l18 6-1 17-17-4zM592 435l19 5-2 28-19-6z" fill="#b2b2b2"/><path d="M649 376l-3 58-37 34 2-28 18-23 1-17z" fill="#999"/>
					<path d="M875 441l8-6 144 38H873z" fill="#adadad"/><path d="M875 443l110 30H873z" fill="#888"/>
					<path d="M1120 168l232 62 12-12v-50z" fill="#888"/><path d="M1153 168h27l172 46v8z" fill="#b2b2b2"/><path d="M1180 168h27l145 40v7z" fill="#757575"/><path d="M1207 168h157v44l-12 2z" fill="#b2b2b2"/><path d="M1257 168h22l71 19-1 6z" fill="#e5e5e5"/><path d="M1346 192l4-5 1 13 13 11-12 5z" fill="#999"/><path d="M1352 230v-8l12-12v10z" fill="#777"/>
					<path d="M1164 356c8 36 52 74 86 69 14 0 24-4 29-7l-44 55h-165z" fill="url(#bowl)"/>
					<path d="M1126 345l38 11-94 117h-45zM1299 392l38 10-57 71h-45l44-55z" fill="#e5e5e5"/><path d="M1337 402l-3 50-17 21h-37z" fill="#999"/>
					<!-- 钢筋网 -->
					<path d="M714 233l51-65h-23l-22 34z" fill="url(#posts)"/><path d="M716 228v-20M721 222v-28M726 216v-33M731 210v-38M736 203v-35M741 197v-29M746 191v-23M751 184v-16" stroke="#6d625c"/>
					<path d="M729 236l55-68h132L792 322z" fill="url(#net1)"/><path d="M729 236l55-68h132L792 322z" fill="url(#net2)"/>
					<path d="M792 322l124-154h109l-4 58-197 247h-42z" fill="url(#wall)"/>
					<path d="M1010 168h15l-4 58-197 247h-18l201-251z" fill="#000" opacity=".4"/>
					<path d="M776 319l16 3-10 151h-15z" fill="url(#posts)"/>
					<g fill="none" stroke="#f00" stroke-dasharray="3 2"><path d="M729 236l271 73M729 240l271 73M735 245l265 72M738 250l262 71"/></g>
					<g fill="none" stroke="#f00" stroke-dasharray="2 4"><path d="M794 343l140-175M785 383l172-215"/></g>
					<g fill="none" stroke="#fff">
						<path d="M765 168l-51 65 62 86-9 154M784 168l-55 68 63 86-10 151M714 233l15 3M916 168L792 322" stroke-width="2"/>
						<path d="M1025 168l-4 58-197 247" stroke-width="2"/>
						<path d="M900 168L776 319M1010 168l-3 54-201 251" stroke-dasharray="4 2"/><path d="M1007 222l14 4"/>
					</g>
					<g fill="none" stroke="#777"><circle cx="812" cy="320" r="135"/><circle cx="676" cy="320" r="8" stroke="#999"/><circle cx="948" cy="320" r="8" stroke="#999"/><circle cx="812" cy="185" r="8"/><circle cx="812" cy="455" r="8"/></g>
					<!-- 标注 -->
					<g class="marks">
						<text transform="translate(485 260) rotate(-90)">2680</text><text transform="translate(353 425) rotate(-90)">3400</text>
						<text x="457" y="186">C</text><text x="618" y="186">B</text><text x="1161" y="186">D</text><text x="1348" y="405">4</text><text class="tiny" transform="translate(525 200) rotate(-65)">1900</text>
					</g>
					<!-- 坐标轴 -->
					<path d="M315 422v-28" stroke="#0080ff" stroke-width="4"/><path d="M316 382l-5 12h10z" fill="#0080ff"/><path d="M304 375h8l-8 9h9" fill="none" stroke="#0080ff"/>
					<path d="M315 422l14-18" stroke="#0f0" stroke-width="3"/><path d="M333 399l-8 4 5 6z" fill="#0f0"/><path d="M338 402l4 4M346 401l-7 9" stroke="#0f0"/>
					<path d="M315 423l34 8" stroke="#f00" stroke-width="4"/><path d="M360 435l-11-8-2 8zM353 424l10 8M363 421l-8 11" fill="#f00" stroke="#f00"/>
				</svg>
				<div class="panel">
					<h3>钢筋显示控制面板</h3>
					<div class="checks">
						<label class="focus"><input type="checkbox" checked><span>水平纵筋</span></label>
						<label><input type="checkbox" checked><span>横向钢筋</span></label>
						<label><input type="checkbox" checked><span>显示其它图元</span></label>
						<label><input type="checkbox" checked><span>显示详细公式</span></label>
					</div>
				</div>
			</section>

			<div class="bar snap">
				<div class="tools">
					<i class="grip"></i>
					<button class="btn"><svg class="ico"><use href="#s-int"/></svg>交点</button>
					<button class="btn on"><svg class="ico"><use href="#s-perp"/></svg>垂点</button>
					<button class="btn on"><svg class="ico"><use href="#s-mid"/></svg>中点</button>
					<button class="btn"><svg class="ico"><use href="#s-vert"/></svg>顶点</button>
					<button class="btn"><svg class="ico"><use href="#s-coord"/></svg>坐标</button>
				</div>
				<div class="tools tools-offset">
					<i class="grip"></i>
					<select class="combo short" aria-label="偏移方式"><option>不偏移</option></select>
					<i class="sep"></i>
					<label for="offX">X=</label><input class="spin" id="offX" value="0"><span class="unit">mm</span>
					<label for="offY">Y=</label><input class="spin" id="offY" value="0"><span class="unit">mm</span>
					<i class="sep"></i>
					<label class="turn"><input type="checkbox">旋转</label><input class="spin wide" aria-label="旋转角度" value="0.000"><span class="unit">°</span>
				</div>
			</div>

			<section class="rebar">
				<div class="handle"><button aria-label="关闭"><svg><use href="#b-close"/></svg></button><i></i></div>
				<div class="rebar-main">
					<div class="tools">
						<button class="step" aria-label="首行"><svg><use href="#n-first"/></svg></button>
						<button class="step" aria-label="上一行"><svg><use href="#n-prev"/></svg></button>
						<button class="step" aria-label="下一行"><svg><use href="#n-next"/></svg></button>
						<button class="step" aria-label="末行"><svg><use href="#n-last"/></svg></button>
						<i class="sep"></i>
						<button class="step" aria-label="上移"><svg><use href="#n-up"/></svg></button>
						<button class="step" aria-label="下移"><svg><use href="#n-down"/></svg></button>
						<i class="sep"></i>
						<button class="btn" disabled><svg class="ico"><use href="#r-ins"/></svg>插入</button>
						<button class="btn" disabled><svg class="ico"><use href="#r-del"/></svg>删除</button>
						<button class="btn" disabled><svg class="ico"><use href="#r-scale"/></svg>缩尺配筋</button>
						<button class="btn"><svg class="ico"><use href="#r-info"/></svg>钢筋信息</button>
						<button class="btn"><svg class="ico"><use href="#r-lib"/></svg>钢筋图库</button>
						<button class="btn"><svg class="ico"><use href="#r-other"/></svg>其他<i class="arr near"></i></button>
						<button class="btn">关闭</button>
						<i class="sep"></i>
						<span class="total">单构件钢筋总重(kg)：743.971</span>
					</div>
					<div class="grid">
						<div class="grid-body">
							<table>
								<colgroup><col class="w-head"><col class="w-name"><col class="w-dia"><col class="w-lv"><col class="w-head"><col><col class="w-calc"><col class="w-desc"><col class="w-bend"><col class="w-len"><col class="w-s"><col class="w-s"><col class="w-loss"><col class="w-kg"></colgroup>
								<thead>
									<tr><th></th><th class="hot">筋号</th><th>直径<kbd>(mm)</kbd></th><th>级别</th><th>图号</th><th>图形</th><th>计算公式</th><th>公式描述</th><th>弯曲调整<kbd>(mm)</kbd></th><th>长度<kbd>(mm)</kbd></th><th>根数</th><th>搭接</th><th>损耗<kbd>(%)</kbd></th><th>单重<kbd>(kg)</kbd></th></tr>
								</thead>
								<tbody>
									<tr><th class="cur">1*</th><td class="name cell-on">横向钢筋<kbd>.1</kbd></td><td>12</td><td class="mid"><svg viewBox="0 0 10 10"><path d="M3.500 0v9M6.500 0v9M0 8.500h10" stroke="#000"/><ellipse cx="5" cy="4.500" rx="4" ry="2.500" fill="none" stroke="#000"/></svg></td><td>0</td>
										<td class="shape"><svg viewBox="0 0 60 58"><path d="M22 3l5 6v46" fill="none" stroke="#000" stroke-width="2"/><text x="26" y="14">583</text><text transform="translate(41 33) rotate(-90)">3147</text></svg></td>
										<td>3731</td><td class="zh">净长</td><td>(0)</td><td>3731</td><td>53</td><td>0</td><td>0</td><td>3.313</td></tr>
									<tr><th>2</th><td class="name">横向钢筋<kbd>.2</kbd></td><td>12</td><td class="mid"><svg viewBox="0 0 10 10"><path d="M3.500 0v9M6.500 0v9M0 8.500h10" stroke="#000"/><ellipse cx="5" cy="4.500" rx="4" ry="2.500" fill="none" stroke="#000"/></svg></td><td>0</td>
										<td class="shape"><svg viewBox="0 0 60 58"><path d="M27 16v8l20 22v9" fill="none" stroke="#000" stroke-width="2"/><text transform="translate(15 1) rotate(90)">480</text><text class="blue" transform="translate(12 27) rotate(45)">1542</text><text transform="translate(42 52) rotate(-90)">916</text></svg></td>
										<td>40*d+2058</td><td class="zh">端头+净长</td><td>(0)</td><td>2538</td><td>53</td><td>0</td><td>0</td><td>2.254</td></tr>
									<tr><th></th><td class="name"></td><td></td><td></td><td></td>
										<td class="shape"><svg viewBox="0 0 60 58"><text transform="translate(33 12) rotate(-90)">80</text></svg></td>
										<td></td><td></td><td></td><td></td><td></td><td></td><td></td><td></td></tr>
								</tbody>
							</table>
						</div>
						<div class="vbar"><svg><use href="#c-up"/></svg><i class="grid-thumb"></i><svg><use href="#c-down"/></svg></div>
						<div class="hbar"><svg><use href="#c-left"/></svg><i></i><svg><use href="#c-right"/></svg></div>
					</div>
				</div>
			</section>
		</main>
	</div>

	<footer class="status">
		<span class="st-pos">X=40142 Y=-2395</span>
		<span class="st-h"><b>层高</b>:2.8m</span>
		<span class="st-b"><b>底标高</b>:20.35m</span>
		<span class="st-n">1(1)</span>
		<span class="st-msg"></span>
		<span class="st-fps">61.1 FPS</span>
	</footer>

	<div class="taskbar">
		<button class="start" aria-label="开始"><svg viewBox="0 0 16 16"><path d="M0 2.300L6.500 1.400v6.100H0zM7.300 1.300L16 0v7.500H7.300zM0 8.300h6.500v6.300L0 13.700zM7.300 8.300H16V16l-8.700-1.300z" fill="#fff"/></svg></button>
		<div class="search"><svg viewBox="0 0 22 22"><circle cx="11" cy="11" r="8.500" fill="none" stroke="#eee" stroke-width="2.500"/></svg><input type="text" aria-label="搜索" placeholder="在这里输入你要搜索的内容"><svg class="mic" viewBox="0 0 16 16"><rect x="5.500" y="1" width="5" height="8" rx="2.500" fill="none" stroke="#aaa"/><path d="M3 7c0 6 10 6 10 0M8 12v3M5 15h6" fill="none" stroke="#aaa"/></svg></div>
		<button class="app taskview" aria-label="任务视图"><svg viewBox="0 0 24 24"><path d="M6.500 5.500h11v13h-11zM4 6.500H2.500v10H4M20 6.500h1.500v10H20" fill="none" stroke="#fff" stroke-width="1.200"/></svg></button>
		<button class="app big" aria-label="应用"><svg viewBox="0 0 24 24"><g fill="#e8e8e8"><path d="M11.500 11C6 13 1 11 1 6c0-4 5-6 8-4-5 1-4 6 2.500 9z"/><path d="M13 11.500C11 6 13 1 18 1c4 0 6 5 4 8-1-5-6-4-9 2.500z"/><path d="M12.500 13c5.500-2 10.500 0 10.500 5 0 4-5 6-8 4 5-1 4-6-2.500-9z"/><path d="M11 12.500c2 5.500 0 10.500-5 10.500-4 0-6-5-4-8 1 5 6 4 9-2.500z"/><path d="M11 10C6 8 6 3 10 1.500c2 2 2 5 1 8.500zM14 11c2-5 7-5 8.500-1-2 2-5 2-8.500 1zM13 14c5 2 5 7 1 8.500-2-2-2-5-1-8.500zM10 13c-2 5-7 5-8.500 1 2-2 5-2 8.500-1z"/></g></svg></button>
		<button class="app big" aria-label="浏览器"><svg viewBox="0 0 24 24"><path d="M19.500 16a8 8 0 1 1 .5-4H7" fill="none" stroke="#e8e8e8" stroke-width="3.500"/><path d="M4 22C-1 18 14 2 21 2c2 1 1 3 0 5" fill="none" stroke="#e8e8e8" stroke-width="1.500"/></svg></button>
		<button class="app big" aria-label="提醒"><svg class="bell" viewBox="0 0 30 26"><path d="M18 13c3 6-2 11-8 10S1 15 5 10s9-4 11-1M14 13c2 3 0 7-4 6s-4-6-1-8 5-1 6 1" fill="none" stroke="#ddd" stroke-width="1.500"/><path d="M21 1c4 0 4 4 4 7l2 3H15l2-3c0-3 0-7 4-7zM19 12h4l-2 2z" fill="#e8a712"/></svg></button>
		<button class="app" aria-label="Edge"><svg viewBox="0 0 24 24"><path d="M2 11C3 4 8 2 12 2c6 0 10 4 10 11H9c0 6 7 6 12 3v5c-6 3-16 2-17-6 0-4 3-6 5-7-1 1-1 2-1 3h7c0-6-8-6-13 0z" fill="#0a7bdc"/></svg></button>
		<button class="app" aria-label="IE"><svg viewBox="0 0 24 24"><path d="M20 16a8 8 0 1 1 .5-4H7" fill="none" stroke="#3c9be8" stroke-width="4"/><path d="M3 22C-2 17 14 1 22 1c2 2 0 5-1 6" fill="none" stroke="#f2c92e" stroke-width="2"/></svg></button>
		<button class="app run" aria-label="资源管理器"><svg viewBox="0 0 24 24"><path d="M1 3h8l1 2h12v16H1z" fill="#f5d36f"/><path d="M1 8h21v4H1z" fill="#ffe9a6"/><path d="M5 13h13v8h-4v-4H9v4H5z" fill="#37b1e6"/></svg></button>
		<button class="app run" aria-label="广联达"><svg viewBox="0 0 24 24"><path d="M24 2c-2 4-6 4-10 4-5 0-7 3-6 7s7 5 8 1c0-2-2-3-4-1 0-4 4-5 7-4 5 2 4 10-1 13-3 1-10 2-14-2C-1 15 0 6 6 3c6-3 12 0 18-1z" fill="#1f9cf0"/></svg></button>
		<button class="app run" aria-label="写字板"><svg viewBox="0 0 24 24"><rect width="24" height="24" rx="2" fill="#f08c1a"/><path d="M4 3l14 2v16L3 19z" fill="#fff6d8"/><path d="M6 8l8 1M6 12l8 1M6 16l6 1" stroke="#997"/><path d="M22 2l-9 14-2 2 1-4 7-13z" fill="#8c2a12"/></svg></button>
		<button class="app run" aria-label="绿色浏览器"><svg viewBox="0 0 24 24"><circle cx="12" cy="12" r="11" fill="#52b52f"/><path d="M18 15a6.500 6.500 0 1 1 .5-3H7" fill="none" stroke="#fff" stroke-width="3"/><path d="M3 22C0 18 14 4 22 3" fill="none" stroke="#b8ec9a" stroke-width="1.500"/></svg></button>
		<button class="app run cur" aria-label="钢筋算量"><svg><use href="#app"/></svg></button>
		<div class="tray">
			<span class="t-link">链接</span>
			<span class="t-cpu">40%<br>CPU使用</span>
			<svg class="t-wifi"><use href="#wifi"/></svg>
			<svg class="t-chev" viewBox="0 0 14 14"><path d="M2 9l5-5 5 5" fill="none" stroke="#fff" stroke-width="1.300"/></svg>
			<svg class="t-bat" viewBox="0 0 18 14"><path d="M5 4h11v7H5zM17 6v3M1 2v3h4V2M3 5v4h2M2 0v2M4 0v2" fill="none" stroke="#fff" stroke-width="1.200"/><path d="M7 5h8v5H7z" fill="#fff"/></svg>
			<svg class="t-net" viewBox="0 0 16 16"><path d="M2 13A11 11 0 0 1 13 2M5 14a9 9 0 0 1 8-8M8 14a5 5 0 0 1 5-5M11 14a2 2 0 0 1 2-2" fill="none" stroke="#fff"/></svg>
			<svg class="t-vol" viewBox="0 0 18 16"><path d="M1 6h3l4-4v12l-4-4H1zM10 5c2 2 2 4 0 6M12 3c3 3 3 7 0 10" fill="none" stroke="#fff"/><path d="M15 2c3 4 3 8 0 12" fill="none" stroke="#777"/></svg>
			<svg class="t-key" viewBox="0 0 24 14"><rect x=".5" y=".5" width="22" height="13" fill="none" stroke="#fff"/><path d="M3 4.500h17M3 7.500h17" stroke="#fff" stroke-dasharray="1 1"/><path d="M6 10.500h11" stroke="#fff"/></svg>
			<span class="t-ime">A</span>
			<svg class="t-sogou"><use href="#sogou"/></svg>
			<span class="t-time">15:21<br>2018/6/13</span>
			<svg class="t-note" viewBox="0 0 18 18"><path d="M1 1.500h15.500v11H11L9 15.500 7 12.500H1z" fill="none" stroke="#fff" stroke-width="1.200"/></svg>
		</div>
	</div>

	<!-- 悬浮窗 -->
	<div class="ball">66</div>
	<div class="ime">
		<svg class="ime-logo"><use href="#sogou"/></svg>
		<b>A</b>
		<svg viewBox="0 0 18 18"><circle cx="6" cy="6" r="2"/><path d="M10 10h4c0 3-1 4-3 5l1-3h-2z"/></svg>
		<svg viewBox="0 0 18 18"><circle cx="9" cy="9" r="7" fill="none" stroke="#2077cc" stroke-width="1.500"/><circle cx="6.500" cy="7" r="1.200"/><circle cx="11.500" cy="7" r="1.200"/><path d="M5 10c1 4 7 4 8 0" fill="none" stroke="#2077cc" stroke-width="1.500"/></svg>
		<svg viewBox="0 0 18 18"><rect x="6" y="1" width="6" height="10" rx="3"/><path d="M3.500 8c0 7 11 7 11 0M9 13v4M6 16.500h6" fill="none" stroke="#2077cc" stroke-width="1.500"/></svg>
		<svg viewBox="0 0 18 18"><rect x="1" y="3" width="16" height="12" rx="1"/><path d="M3 6.500h12M3 9.500h12" stroke="#fff" stroke-width="1.500" stroke-dasharray="2 1"/><path d="M5 12.500h8" stroke="#fff"/></svg>
		<svg class="pale" viewBox="0 0 18 18"><circle cx="7" cy="5" r="4"/><path d="M1 15c0-5 3-6 6-6s4 1 5 2v4z"/><path d="M6 10.500h4v2.500H6v3h4.500M12 10v3h4M16 10v6" fill="none" stroke="#fff" stroke-width="3"/><path d="M6 10.500h4v2.500H6v3h4.500M12 10v3h4M16 10v6" fill="none" stroke="#b8c4da" stroke-width="1.300"/></svg>
		<svg viewBox="0 0 18 18"><path d="M5 2c2 2 6 2 8 0l4 3-2 4-2-1v8H5V8L3 9 1 5z"/></svg>
		<svg viewBox="0 0 18 18"><path d="M17 4l-3 3-3-1-1-3 3-2c-4-1-7 2-5 6l-7 7 3 3 7-7c4 2 7-2 6-6z"/></svg>
	</div>
	<div class="net">
		<span class="net-ico"><svg><use href="#wifi"/></svg></span>
		<span class="net-text">
			<span><svg viewBox="0 0 12 12"><path d="M4 0v10L1 7" fill="none" stroke="#20b464" stroke-width="2"/><path d="M8 12V2l3 3" fill="none" stroke="#f28518" stroke-width="2"/></svg>0.00K/s</span>
			<span><svg viewBox="0 0 12 12"><path d="M2 2h7v9H2z" fill="none" stroke="#20b464" stroke-width="1.500"/><path d="M2 5h7v6H2zM3 0h2v2H3z" fill="#20b464"/></svg>0</span>
		</span>
	</div>
</body>
</html>
```

FILE: styles.css
```
* {
	box-sizing: border-box;
}

body {
	margin: 0;
	height: 100vh;
	overflow: hidden;
	display: flex;
	flex-direction: column;
	background: #f0f0f0;
	color: #000;
	font: 12px/16px "Open Sans", "Noto Sans CJK SC", sans-serif;
}

button, input, select {
	font: inherit;
	color: inherit;
	margin: 0;
}

button {
	padding: 0;
	border: 0;
	background: none;
	white-space: nowrap;
}

svg {
	display: block;
	flex: none;
}

i, em {
	font-style: normal;
}

kbd {
	font: 10px/16px "DejaVu Sans Mono", monospace;
}

.sprite {
	width: 0;
	height: 0;
	position: absolute;
}

.ico {
	width: 16px;
	height: 16px;
}

/* 标题栏 */
.title {
	flex: none;
	display: flex;
	align-items: center;
	height: 23px;
	padding-left: 2px;
	background: #fff;
	color: #999;
	font-family: "Inter", "Noto Sans CJK SC", sans-serif;
}

.title-text {
	flex: 1;
	margin-left: 5px;
	white-space: nowrap;
}

.win {
	width: 46px;
	height: 23px;
	display: flex;
	align-items: center;
	justify-content: center;
}

.win svg {
	width: 10px;
	height: 10px;
}

/* 菜单 */
.menu {
	flex: none;
	display: flex;
	align-items: center;
	gap: 12px;
	height: 30px;
	padding-left: 7px;
}

.menu button {
	display: flex;
	align-items: center;
	gap: 3px;
}

.news {
	margin-left: 20px;
	color: #0c6c6c;
	text-decoration: none;
	white-space: nowrap;
}

.beans {
	margin-left: auto;
}

.menu .beans {
	gap: 9px;
}

.more {
	display: flex;
	align-self: flex-start;
	margin: 4px 3px 0 auto;
}

.menu .more {
	margin: 5px 3px 0 20px;
}

.more svg {
	width: 10px;
	height: 8px;
}

/* 工具栏 */
.main-bar {
	flex: none;
	display: flex;
	gap: 3px;
	height: 30px;
	padding-left: 1px;
}

.tools {
	display: flex;
	align-items: center;
	height: 28px;
	border-radius: 3px;
	background: linear-gradient(#fdfdfd, #f1f1f1);
}

.tools-file {
	width: 150px;
	padding-left: 1px;
}

.tools-calc {
	width: 548px;
	padding-left: 1px;
}

.tools-file .more {
	margin-right: 2px;
}

.tools-view {
	flex: 1;
}

.btn {
	display: flex;
	align-items: center;
	gap: 4px;
	height: 24px;
	padding: 0 3px 0 2px;
	border: 1px solid transparent;
	flex: none;
}

.btn:disabled {
	color: #8a8a8a;
}

.btn.on {
	border-color: #0078d7;
	background: #dceaf6;
}

.btn.white {
	background: #fff;
}

.sigma {
	width: 16px;
	text-align: center;
	font-size: 14px;
}

.arr {
	width: 6px;
	height: 3px;
	margin-left: 2px;
	border: 3px solid transparent;
	border-top-color: currentColor;
	border-bottom: 0;
}

.arr.near {
	margin-left: -2px;
}

.sep {
	width: 1px;
	height: 14px;
	margin: 0 2px 0 3px;
	background: #b8b8b8;
}

.grip {
	width: 2px;
	height: 16px;
	margin: 0 2px 0 4px;
	background: repeating-linear-gradient(#b0b0b0 0 2px, transparent 2px 4px);
}

.combo {
	appearance: none;
	width: 69px;
	height: 22px;
	margin-right: 3px;
	padding: 0 14px 0 3px;
	border: 0;
	border-radius: 0;
	color: #000;
	background: #fff url("data:image/svg+xml,%3Csvg xmlns='http://www.w3.org/2000/svg' width='6' height='3'%3E%3Cpath d='M0 0h6L3 3z'/%3E%3C/svg%3E") no-repeat right 4px center;
}

.combo.short {
	width: 57px;
}

/* 主体 */
.body {
	flex: 1;
	min-height: 0;
	display: flex;
}

.side {
	flex: none;
	width: 255px;
	margin-right: 4px;
	padding: 1px 0 3px;
	display: flex;
	flex-direction: column;
}

.side-title {
	display: flex;
	align-items: center;
	gap: 8px;
	height: 15px;
	margin: 0 0 1px;
	padding-right: 4px;
	border: 1px solid #888;
	font-size: 13px;
	font-weight: normal;
}

.side-title svg {
	width: 10px;
	height: 10px;
}

.side-title svg:first-child {
	margin-left: auto;
}

.tab {
	flex: none;
	height: 22px;
	border: 1px solid #a0a0a0;
	border-top-color: #fff;
	box-shadow: 0 -1px #a0a0a0;
}

.expand {
	flex: none;
	height: 28px;
	padding: 6px 0 0 4px;
	border: 1px solid #a0a0a0;
	border-width: 1px 2px 0;
	background: linear-gradient(#fff, #f0f0f0);
}

.expand svg {
	width: 42px;
	height: 16px;
}

.tree {
	flex: 1;
	min-height: 0;
	display: flex;
	margin-bottom: 2px;
	border: 1px solid #828790;
	border-left-width: 2px;
	background: #fff;
	overflow: hidden;
}

.tree ul {
	width: 100%;
	margin: 0;
	padding: 0;
	list-style: none;
}

.tree .tree-list {
	flex: 1;
	padding-top: 1px;
	overflow: hidden;
}

.tree li {
	display: flex;
	align-items: center;
	min-height: 16px;
}

.tree .dir {
	flex-wrap: wrap;
	padding-left: 8px;
}

.dir ul {
	margin-left: -8px;
}

.chev {
	width: 9px;
	height: 9px;
}

.folder {
	width: 16px;
	height: 14px;
	margin: 1px 4px 1px 7px;
}

/* 层级虚线 */
.dir ul li {
	padding-left: 43px;
	background-image: repeating-linear-gradient(#808080 0 1px, transparent 1px 2px), repeating-linear-gradient(#808080 0 1px, transparent 1px 2px), repeating-linear-gradient(90deg, #808080 0 1px, transparent 1px 2px);
	background-size: 1px 100%, 1px 100%, 11px 1px;
	background-position: 13px 0, 32px 0, 32px 8px;
	background-repeat: no-repeat;
}

.dir ul li:last-child {
	background-size: 1px 100%, 1px 50%, 11px 1px;
}

.dir ul .ico {
	margin-right: 4px;
}

.sel {
	display: flex;
	background: #d9d9d9;
}

.book {
	width: 14px;
	height: 14px;
}

.new {
	align-self: flex-start;
	margin-left: 2px;
	background: #ffe000;
	font: bold 9px/9px "DejaVu Sans", sans-serif;
}

.vbar {
	width: 16px;
	display: flex;
	flex-direction: column;
	align-items: center;
	justify-content: space-between;
	padding: 4px 0;
	background: #f0f0f0;
}

.vbar svg, .hbar svg {
	width: 10px;
	height: 10px;
}

.vbar i, .hbar i {
	background: #cdcdcd;
}

.tree .vbar {
	margin-right: 2px;
}

.tree-thumb {
	width: 15px;
	height: 224px;
	margin: auto 0 12px;
}

.work {
	flex: 1;
	min-width: 0;
	display: flex;
	flex-direction: column;
	padding-right: 2px;
}

.bar {
	flex: none;
	display: flex;
	gap: 3px;
	height: 28px;
}

.bar:nth-child(3) {
	height: 29px;
}

.tools-axis {
	margin-left: 73px;
}

.tools-empty {
	width: 29px;
}

/* 三维视图 */
.view {
	flex: 1;
	min-height: 0;
	position: relative;
	background: #000;
}

.scene {
	width: 100%;
	height: 100%;
}

.marks {
	fill: #ddd;
	font: 14px "Liberation Sans", sans-serif;
}

.marks .tiny {
	font-size: 10px;
}

.panel {
	position: absolute;
	left: 9px;
	top: 2px;
	width: 168px;
	height: 179px;
	display: flex;
	flex-direction: column;
	padding: 1px;
	border: 1px solid #2a84e0;
	background: #fff;
}

.panel h3 {
	margin: 0;
	padding: 6px 7px 9px;
	font-size: 12px;
	font-weight: normal;
}

.checks {
	flex: 1;
	padding: 1px 0 0 3px;
	border: 2px solid #96999e;
	border-width: 1px 2px 2px 1px;
}

.checks label {
	display: flex;
	align-items: center;
	gap: 3px;
	height: 12px;
}

.checks input, .turn input {
	appearance: none;
	width: 11px;
	height: 11px;
	border: 1px solid #777;
	background: #fff;
}

.checks input:checked {
	background: #fff url("data:image/svg+xml,%3Csvg xmlns='http://www.w3.org/2000/svg' width='9' height='9'%3E%3Cpath d='M1 4l3 3 4-5' fill='none' stroke='%23333' stroke-width='1.3'/%3E%3C/svg%3E");
}

.checks span {
	flex: 1;
	line-height: 12px;
}

.focus span {
	outline: 1px dotted #000;
}

/* 捕捉栏 */
.snap {
	height: 32px;
	align-items: center;
	padding: 0 0 2px 211px;
}

.tools-offset {
	color: #777;
}

.spin {
	width: 58px;
	height: 23px;
	margin: 0 2px 0 3px;
	padding: 0 16px 0 4px;
	border: 1px solid #7a7a7a;
	text-align: right;
	background: #f4f4f4 url("data:image/svg+xml,%3Csvg xmlns='http://www.w3.org/2000/svg' width='6' height='15'%3E%3Cpath d='M0 3h6L3 0zM0 12h6l-3 3z' fill='%23555'/%3E%3C/svg%3E") no-repeat right 4px center;
}

.spin.wide {
	width: 68px;
}

.unit {
	margin-right: 5px;
}

.turn {
	display: flex;
	align-items: center;
	gap: 8px;
	color: #000;
}

/* 钢筋编辑 */
.rebar {
	flex: none;
	display: flex;
	height: 203px;
}

.handle {
	width: 12px;
	display: flex;
	flex-direction: column;
	padding: 2px 0 2px 1px;
}

.handle button {
	width: 10px;
	height: 10px;
	border: 1px solid #555;
	background: #e9c4c4;
}

.handle svg {
	width: 8px;
	height: 8px;
}

.handle i {
	flex: 1;
	width: 7px;
	margin: 4px 0 0 1px;
	background-image: radial-gradient(circle at 1px 1px, #b5b5b5 1px, transparent 1px);
	background-size: 4px 5px;
}

.rebar-main {
	flex: 1;
	min-width: 0;
}

.step {
	width: 23px;
	display: flex;
	justify-content: center;
}

.step svg {
	width: 12px;
	height: 12px;
}

.total {
	margin-left: 4px;
}

.grid {
	display: grid;
	grid-template: 153px 17px / minmax(0, 1fr) 16px;
	margin-top: 1px;
	border: 1px solid #a0a0a0;
	background: #fff;
}

.grid-body {
	overflow: hidden;
}

.grid table {
	width: 100%;
	table-layout: fixed;
	border-collapse: collapse;
}

.grid th, .grid td {
	height: 61px;
	padding: 0 0 0 2px;
	border: 1px solid #bcbcbc;
	border-width: 0 1px 1px 0;
	overflow: hidden;
	white-space: nowrap;
	text-align: left;
	font: 10px/16px "DejaVu Sans Mono", "Noto Sans CJK SC", monospace;
}

.grid th {
	padding: 0;
	text-align: center;
	background: linear-gradient(#fff, #f2f2f2);
}

.grid thead th {
	height: 19px;
	font: 12px/16px "Noto Sans CJK SC", sans-serif;
	background: linear-gradient(#fff, #ececec);
}

.grid td {
	background: #ccffdb;
}

.grid thead .hot {
	color: #5a005a;
	background: linear-gradient(#f9d793, #f2bd5c);
}

.grid .cur {
	color: #5a005a;
	background: #ffd28c;
}

.grid .name {
	border-right-color: #000;
	font: 12px/16px "Noto Sans CJK SC", sans-serif;
}

.grid .zh {
	font: 12px/16px "Noto Sans CJK SC", sans-serif;
}

.grid .cell-on {
	background: #aeebdb;
}

.grid .mid {
	padding: 0;
}

.mid svg {
	width: 10px;
	height: 10px;
	margin: 0 auto;
}

.grid .shape {
	padding: 0;
}

.shape svg {
	width: 60px;
	height: 58px;
	margin: 0 auto 0 69px;
	font: 10px "DejaVu Sans Mono", monospace;
}

.blue {
	fill: #16567a;
}

.w-head { width: 33px; }
.w-name { width: 73px; }
.w-dia { width: 56px; }
.w-lv { width: 36px; }
.w-s { width: 38px; }
.w-calc { width: 166px; }
.w-desc { width: 156px; }
.w-bend { width: 81px; }
.w-len { width: 61px; }
.w-loss { width: 49px; }
.w-kg { width: 53px; }

.grid-thumb {
	width: 15px;
	height: 19px;
	margin: 4px 0 auto;
}

.hbar {
	grid-column: 1 / 3;
	display: flex;
	align-items: center;
	padding: 0 20px 0 4px;
	background: #f0f0f0;
}

.hbar i {
	width: 54%;
	height: 15px;
	margin: 0 auto 0 4px;
}

/* 状态栏 */
.status {
	flex: none;
	display: flex;
	gap: 3px;
	height: 20px;
	font: 10px/16px "DejaVu Sans Mono", "Noto Sans CJK SC", monospace;
}

.status span {
	height: 19px;
	padding: 1px;
	border: 1px solid #d4d4d4;
	white-space: nowrap;
}

.status b {
	font: 12px/16px "Noto Sans CJK SC", sans-serif;
}

.st-pos { width: 148px; }
.st-h { width: 77px; }
.st-b { width: 97px; }
.st-n { width: 47px; }
.st-msg { flex: 1; }
.st-fps { width: 70px; }

/* 任务栏 */
.taskbar {
	flex: none;
	display: flex;
	height: 40px;
	background: #000c10;
	color: #fff;
}

.start {
	width: 48px;
	display: flex;
	align-items: center;
	justify-content: center;
	background: #000;
}

.start svg {
	width: 16px;
	height: 16px;
}

.search {
	width: 344px;
	display: flex;
	align-items: center;
	padding: 0 12px 0 9px;
	background: #333;
}

.search svg {
	width: 22px;
	height: 22px;
}

.search .mic {
	width: 16px;
	height: 16px;
}

.search input {
	flex: 1;
	min-width: 0;
	padding: 0 0 0 5px;
	border: 0;
	background: none;
	font-size: 14px;
}

.search input::placeholder {
	color: #999;
}

.app {
	width: 40px;
	display: flex;
	align-items: center;
	justify-content: center;
	border: solid transparent;
	border-width: 3px 0 2px;
}

.app svg {
	width: 23px;
	height: 23px;
}

.app.big {
	width: 52px;
}

.app .bell {
	width: 30px;
	height: 26px;
}

.app.taskview {
	width: 48px;
}

.run {
	background: linear-gradient(#76b9ed, #76b9ed) no-repeat center bottom / 31px 2px border-box;
}

.run.cur {
	background-color: #333e42;
	background-size: 39px 2px;
}

.tray {
	display: flex;
	align-items: center;
	margin-left: auto;
	padding-right: 13px;
	border-right: 5px solid #000;
	text-align: center;
}

.tray span {
	line-height: 17px;
}

.t-link { width: 50px; }
.t-cpu { width: 64px; }
.t-wifi { width: 22px; height: 22px; margin: 0 4px 0 12px; color: #6bdc1c; }
.t-chev { width: 14px; height: 14px; margin: 0 40px 0 6px; }
.t-bat { width: 18px; height: 14px; margin-right: 7px; }
.t-net { width: 16px; height: 16px; margin-right: 6px; }
.t-vol { width: 18px; height: 16px; margin-right: 7px; }
.t-key { width: 24px; height: 14px; margin-right: 3px; }
.tray .t-ime { width: 28px; font-size: 18px; }
.t-sogou { width: 18px; height: 18px; margin: 0 8px 0 5px; }
.t-time { width: 74px; }
.t-note { width: 18px; height: 18px; margin-left: 12px; }

/* 悬浮窗 */
.ball {
	position: absolute;
	top: -28px;
	left: 1008px;
	width: 48px;
	height: 48px;
	padding-top: 25px;
	border: 2px solid #ddd;
	border-radius: 50%;
	background: #3cc45c;
	box-shadow: inset 0 0 0 1px #159a3a, 0 1px 5px #888;
	color: #fff;
	text-align: center;
	font-weight: bold;
}

.ime {
	position: absolute;
	top: 16px;
	left: 775px;
	display: flex;
	align-items: center;
	gap: 4px;
	width: 201px;
	height: 24px;
	border: 1px solid #a9bdd4;
	background: #fff;
	color: #2077cc;
	fill: #2077cc;
}

.ime svg, .ime b {
	width: 18px;
	height: 18px;
	text-align: center;
	font-size: 20px;
	font-weight: 600;
	line-height: 18px;
}

.ime .ime-logo {
	width: 28px;
	height: 28px;
	margin-left: -7px;
}

.ime .pale {
	fill: #b8c4da;
}

.net {
	position: absolute;
	top: 24px;
	left: 1110px;
	display: flex;
	align-items: center;
	gap: 6px;
	width: 121px;
	height: 51px;
	padding-left: 6px;
	border: 1px solid #ccc;
	border-radius: 26px;
	background: #fff;
	box-shadow: 0 3px 6px #999;
	color: #666;
	font-size: 11px;
}

.net-ico {
	width: 38px;
	height: 38px;
	padding: 4px;
	border-radius: 50%;
	background: #25c770;
	color: #fff;
}

.net-ico svg {
	width: 30px;
	height: 28px;
}

.net-text, .net-text span {
	display: flex;
	gap: 4px;
	align-items: center;
}

.net-text {
	flex-direction: column;
	align-items: flex-start;
}

.net-text svg {
	width: 12px;
	height: 12px;
}
```
